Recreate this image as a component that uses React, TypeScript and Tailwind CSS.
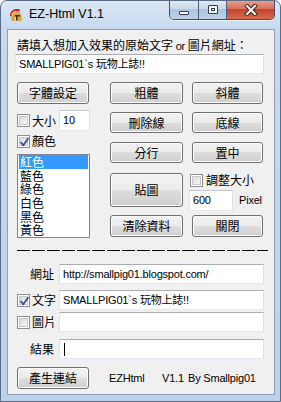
import React from "react";

const LAT = "font-['Liberation_Sans','Noto_Sans_CJK_TC',sans-serif] text-[11px] tracking-[-0.2px]";

function Btn({ children, className = "" }: { children?: React.ReactNode; className?: string }) {
  return (
    <div
      className={
        "flex items-center justify-center rounded-[3px] border border-[#707070] bg-[linear-gradient(#f2f2f2_0%,#ebebeb_50%,#dddddd_50%,#cfcfcf_100%)] shadow-[inset_0_0_0_1px_#fcfcfc] text-[12px] leading-none text-black " +
        className
      }
    >
      {children}
    </div>
  );
}

function Check({ checked = false }: { checked?: boolean }) {
  return (
    <div className="relative flex h-[13px] w-[13px] shrink-0 items-center justify-center border border-[#8e8f8f] bg-white">
      <div className="h-[9px] w-[9px] border border-[#c8c8c8] bg-[linear-gradient(135deg,#d9d9d9,#f8f8f8)]" />
      {checked && (
        <svg className="absolute left-[1px] top-[1px]" width="11" height="11" viewBox="0 0 11 11">
          <path d="M2 5.5 L4.3 8.3 L9 1.8" fill="none" stroke="#3c4f93" strokeWidth="1.9" strokeLinecap="round" strokeLinejoin="round" />
        </svg>
      )}
    </div>
  );
}

function Field({ children, className = "" }: { children?: React.ReactNode; className?: string }) {
  return (
    <div
      className={
        "flex h-[20px] items-center overflow-hidden whitespace-nowrap border border-[#abadb3] border-l-[#e2e3ea] border-r-[#dbdfe6] border-b-[#e3e9ef] bg-white px-[3px] leading-none text-black " +
        LAT +
        " " +
        className
      }
    >
      {children}
    </div>
  );
}

function HelmetIcon() {
  return (
    <svg width="16" height="16" viewBox="0 0 16 16">
      <path d="M2 9 C2 3 7 1 12 2.5 L11.5 4.5 C8 3.5 4.5 5 4.2 9 Z" fill="#c8202a" />
      <path d="M3.2 9 C3 5.5 5.5 4 8 4 C11.5 4 13.5 6.5 13.5 9.5 L13.5 14 L9.5 14 L9.5 10 L7 10 L7 14 L3.5 14 Z" fill="#d9a441" />
      <path d="M7 8 L12 8 L12 9.5 L9.5 9.5 L9.5 13.5 L8 13.5 L8 9.5 L7 9.5 Z" fill="#3a2a14" />
      <path d="M4.5 8 C4.8 6 6.2 5 8 5" stroke="#f4d98a" strokeWidth="0.8" fill="none" />
    </svg>
  );
}

const ITEMS = ["藍色", "綠色", "白色", "黑色", "黃色"];

export default function App() {
  return (
    <div className="flex h-[402px] w-[281px] flex-col overflow-hidden rounded-t-[7px] border border-[#5b6d86] bg-[linear-gradient(180deg,#dbe7f4_0px,#c6d9ee_28px,#bcd2ea_100%)] font-['Noto_Sans_CJK_TC','Noto_Sans',sans-serif] text-[12px] text-black">
      {/* Title bar */}
      <div className="flex h-[28px] shrink-0 items-start">
        <div className="ml-[7px] mt-[6px]">
          <HelmetIcon />
        </div>
        <div className="ml-[5px] mt-[5px] font-['Liberation_Sans',sans-serif] text-[12.5px] leading-[16px] text-black">EZ-Html V1.1</div>
        <div className="ml-auto mr-[5px] mt-[-1px] flex h-[20px] overflow-hidden rounded-b-[5px] border border-t-0 border-[#3d4e66] shadow-[0_1px_0_rgba(255,255,255,0.6)]">
          <div className="flex w-[29px] items-center justify-center border-r border-[#4b5d78] bg-[linear-gradient(#e2ebf5_0%,#cbd9ea_45%,#aec4df_50%,#bcd0e7_100%)]">
            <div className="mt-[6px] h-[4px] w-[10px] rounded-[1px] border border-[#2e3a4f] bg-white" />
          </div>
          <div className="flex w-[28px] items-center justify-center border-r border-[#4b5d78] bg-[linear-gradient(#e2ebf5_0%,#cbd9ea_45%,#aec4df_50%,#bcd0e7_100%)]">
            <div className="flex h-[9px] w-[10px] items-center justify-center rounded-[1px] border border-[#2e3a4f] bg-white">
              <div className="h-[3px] w-[4px] border border-[#2e3a4f]" />
            </div>
          </div>
          <div className="flex w-[47px] items-center justify-center bg-[linear-gradient(#e8a493_0%,#d7735e_45%,#c7432c_50%,#d26a4f_100%)]">
            <svg width="14" height="12" viewBox="0 0 14 12">
              <path d="M3 2 L11 10 M11 2 L3 10" stroke="#3a1e1a" strokeWidth="4" strokeLinecap="square" />
              <path d="M3 2 L11 10 M11 2 L3 10" stroke="#ffffff" strokeWidth="2.2" strokeLinecap="square" />
            </svg>
          </div>
        </div>
      </div>

      {/* Client area */}
      <div className="ml-[6px] flex h-[366px] w-[268px] shrink-0 flex-col border border-[#8a9fb9] bg-[#f0f0f0]">
        <div className="ml-[9px] mt-[7px] h-[16px] whitespace-nowrap leading-[16px]">
          請填入想加入效果的原始文字 <span className={LAT}>or</span> 圖片網址：
        </div>
        <Field className="ml-[7px] mt-[1px] w-[249px] pl-[3px]">SMALLPIG01`s 玩物上誌!!</Field>

        {/* Grid */}
        <div className="ml-[9px] mt-[8px] flex">
          {/* left */}
          <div className="flex w-[73px] flex-col">
            <Btn className="h-[22px] w-[72px]">字體設定</Btn>
            <div className="mt-[6px] flex h-[21px] items-center">
              <Check />
              <span className="ml-[2px] leading-none">大小</span>
              <Field className="ml-auto h-[21px] w-[31px] border-[#c2c5cb] border-l-[#dfe1e5] border-r-[#dfe1e5] border-b-[#e5e8ec] text-[#6d6d6d]">10</Field>
            </div>
            <div className="mt-[2px] flex h-[16px] items-center">
              <Check checked />
              <span className="ml-[2px] leading-none">顏色</span>
            </div>
            <div className="mt-[5px] flex h-[84px] w-[73px] flex-col overflow-hidden border border-[#828790] bg-white text-[12px] leading-[13.7px]">
              <div className="mx-px h-[13.7px] shrink-0 bg-[#3399ff] pl-[1px] text-white">紅色</div>
              {ITEMS.map((t) => (
                <div key={t} className="h-[13.7px] shrink-0 pl-[2px]">
                  {t}
                </div>
              ))}
            </div>
          </div>
          {/* middle */}
          <div className="ml-[20px] flex w-[73px] flex-col">
            <Btn className="h-[22px]">粗體</Btn>
            <Btn className="mt-[8px] h-[21px]">刪除線</Btn>
            <Btn className="mt-[9px] h-[21px]">分行</Btn>
            <Btn className="mt-[10px] h-[34px]">貼圖</Btn>
            <Btn className="mt-[8px] h-[22px]">清除資料</Btn>
          </div>
          {/* right */}
          <div className="ml-[9px] flex w-[71px] flex-col">
            <Btn className="h-[22px]">斜體</Btn>
            <Btn className="mt-[8px] h-[21px]">底線</Btn>
            <Btn className="mt-[9px] h-[21px]">置中</Btn>
            <div className="ml-[-2px] mt-[9px] flex h-[16px] items-center">
              <Check />
              <span className="ml-[3px] leading-none">調整大小</span>
            </div>
            <div className="ml-[-3px] mt-[2px] flex h-[21px] items-center">
              <Field className="h-[21px] w-[44px] border-[#c2c5cb] border-l-[#dfe1e5] border-r-[#dfe1e5] border-b-[#e5e8ec] text-[#6d6d6d]">600</Field>
              <span className={"ml-[6px] leading-none " + LAT}>Pixel</span>
            </div>
            <Btn className="mt-[4px] h-[22px]">關閉</Btn>
          </div>
        </div>

        {/* dashed line */}
        <div className="ml-[9px] mt-[12px] h-px w-[251px] bg-[repeating-linear-gradient(90deg,#000_0px,#000_13px,transparent_13px,transparent_15px)]" />

        {/* rows */}
        <div className="mt-[13px] flex items-center">
          <span className="w-[46px] text-right leading-none">網址</span>
          <Field className="ml-[5px] w-[205px]">http://smallpig01.blogspot.com/</Field>
        </div>
        <div className="mt-[6px] flex items-center">
          <div className="ml-[9px]">
            <Check checked />
          </div>
          <span className="ml-[2px] w-[27px] leading-none">文字</span>
          <Field className="w-[205px]">SMALLPIG01`s 玩物上誌!!</Field>
        </div>
        <div className="mt-[2px] flex items-center">
          <div className="ml-[9px]">
            <Check />
          </div>
          <span className="ml-[2px] w-[27px] leading-none">圖片</span>
          <Field className="w-[205px]" />
        </div>
        <div className="mt-[7px] flex items-center">
          <span className="w-[46px] text-right leading-none">結果</span>
          <Field className="ml-[5px] w-[205px] border-[#3d7bad] border-l-[#a4c9e3] border-r-[#a4c9e3] border-b-[#b7d9ed]">
            <div className="ml-[1px] h-[13px] w-px bg-black" />
          </Field>
        </div>
        <div className={"mt-[8px] flex items-center whitespace-nowrap " + LAT}>
          <Btn className="ml-[9px] h-[22px] w-[72px] font-['Noto_Sans_CJK_TC',sans-serif] tracking-normal">產生連結</Btn>
          <span className="ml-[20px] w-[53px] leading-none">EZHtml</span>
          <span className="w-[26px] leading-none">V1.1</span>
          <span className="leading-none">By Smallpig01</span>
        </div>
      </div>
    </div>
  );
}
